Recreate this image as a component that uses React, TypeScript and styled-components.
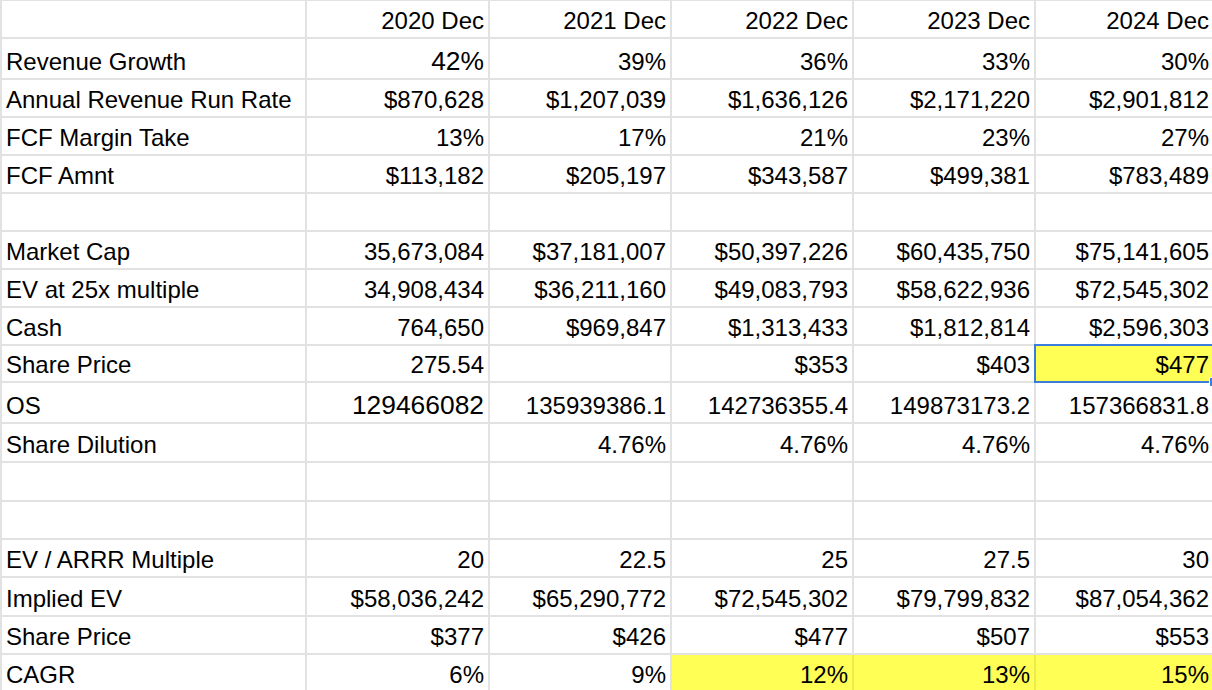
import React from "react";
import styled, { createGlobalStyle } from "styled-components";

const GRID = "#e2e2e2";
const YELLOW = "#ffff55";
const BLUE = "#3b7ddd";

const GlobalStyle = createGlobalStyle`
  html, body {
    margin: 0;
    padding: 0;
    background: #ffffff;
    overflow: hidden;
  }
  * { box-sizing: border-box; }
`;

const Viewport = styled.div`
  width: 1212px;
  height: 690px;
  overflow: hidden;
  background: #ffffff;
`;

const Sheet = styled.div`
  display: flex;
  flex-direction: column;
  width: max-content;
  border-top: 1px solid ${GRID};
  border-left: 2px solid ${GRID};
  font-family: "Liberation Sans", Arial, Helvetica, sans-serif;
  color: #000000;
`;

const Row = styled.div<{ $h: number }>`
  display: grid;
  grid-template-columns: 305px 183px 182px 182px 182px 179px;
  height: ${(p) => p.$h}px;
`;

const Cell = styled.div<{ $label?: boolean; $big?: boolean; $fill?: boolean }>`
  position: relative;
  display: flex;
  align-items: flex-end;
  justify-content: ${(p) => (p.$label ? "flex-start" : "flex-end")};
  padding: 0 ${(p) => (p.$label ? "0" : "4px")} 2px ${(p) => (p.$label ? "4px" : "0")};
  border-right: 2px solid ${(p) => (p.$fill ? "#ecec4f" : GRID)};
  border-bottom: 2px solid ${GRID};
  background: ${(p) => (p.$fill ? YELLOW : "transparent")};
  font-size: ${(p) => (p.$big ? "26.4px" : "24px")};
  line-height: 1.15;
  white-space: nowrap;
`;

const Selection = styled.div`
  position: absolute;
  top: -2px;
  left: -2px;
  right: -2px;
  bottom: -2px;
  border: 2px solid ${BLUE};
  pointer-events: none;
`;

const FillHandle = styled.div`
  position: absolute;
  right: -6px;
  bottom: -6px;
  width: 10px;
  height: 10px;
  background: ${BLUE};
  border: 1px solid #ffffff;
`;

type CellSpec = {
  v: string;
  big?: boolean;
  fill?: boolean;
  selected?: boolean;
};

type RowSpec = {
  h: number;
  label: string;
  cells: CellSpec[];
};

const c = (v: string, extra: Partial<CellSpec> = {}): CellSpec => ({ v, ...extra });
const plain = (...vals: string[]) => vals.map((v) => c(v));
const blank = () => plain("", "", "", "", "");

const rows: RowSpec[] = [
  { h: 38, label: "", cells: plain("2020 Dec", "2021 Dec", "2022 Dec", "2023 Dec", "2024 Dec") },
  {
    h: 41,
    label: "Revenue Growth",
    cells: [c("42%", { big: true }), ...plain("39%", "36%", "33%", "30%")],
  },
  {
    h: 38,
    label: "Annual Revenue Run Rate",
    cells: plain("$870,628", "$1,207,039", "$1,636,126", "$2,171,220", "$2,901,812"),
  },
  { h: 38, label: "FCF Margin Take", cells: plain("13%", "17%", "21%", "23%", "27%") },
  {
    h: 38,
    label: "FCF Amnt",
    cells: plain("$113,182", "$205,197", "$343,587", "$499,381", "$783,489"),
  },
  { h: 38, label: "", cells: blank() },
  {
    h: 38,
    label: "Market Cap",
    cells: plain("35,673,084", "$37,181,007", "$50,397,226", "$60,435,750", "$75,141,605"),
  },
  {
    h: 38,
    label: "EV at 25x multiple",
    cells: plain("34,908,434", "$36,211,160", "$49,083,793", "$58,622,936", "$72,545,302"),
  },
  {
    h: 38,
    label: "Cash",
    cells: plain("764,650", "$969,847", "$1,313,433", "$1,812,814", "$2,596,303"),
  },
  {
    h: 37,
    label: "Share Price",
    cells: [...plain("275.54", "", "$353", "$403"), c("$477", { fill: true, selected: true })],
  },
  {
    h: 41,
    label: "OS",
    cells: [
      c("129466082", { big: true }),
      ...plain("135939386.1", "142736355.4", "149873173.2", "157366831.8"),
    ],
  },
  { h: 39, label: "Share Dilution", cells: plain("", "4.76%", "4.76%", "4.76%", "4.76%") },
  { h: 39, label: "", cells: blank() },
  { h: 38, label: "", cells: blank() },
  { h: 38, label: "EV / ARRR Multiple", cells: plain("20", "22.5", "25", "27.5", "30") },
  {
    h: 39,
    label: "Implied EV",
    cells: plain("$58,036,242", "$65,290,772", "$72,545,302", "$79,799,832", "$87,054,362"),
  },
  { h: 38, label: "Share Price", cells: plain("$377", "$426", "$477", "$507", "$553") },
  {
    h: 38,
    label: "CAGR",
    cells: [
      ...plain("6%", "9%"),
      c("12%", { fill: true }),
      c("13%", { fill: true }),
      c("15%", { fill: true }),
    ],
  },
];

export default function App() {
  return (
    <>
      <GlobalStyle />
      <Viewport>
        <Sheet>
          {rows.map((row, ri) => (
            <Row key={ri} $h={row.h}>
              <Cell $label>{row.label}</Cell>
              {row.cells.map((cell, ci) => (
                <Cell key={ci} $big={cell.big} $fill={cell.fill}>
                  {cell.v}
                  {cell.selected && (
                    <Selection>
                      <FillHandle />
                    </Selection>
                  )}
                </Cell>
              ))}
            </Row>
          ))}
        </Sheet>
      </Viewport>
    </>
  );
}
